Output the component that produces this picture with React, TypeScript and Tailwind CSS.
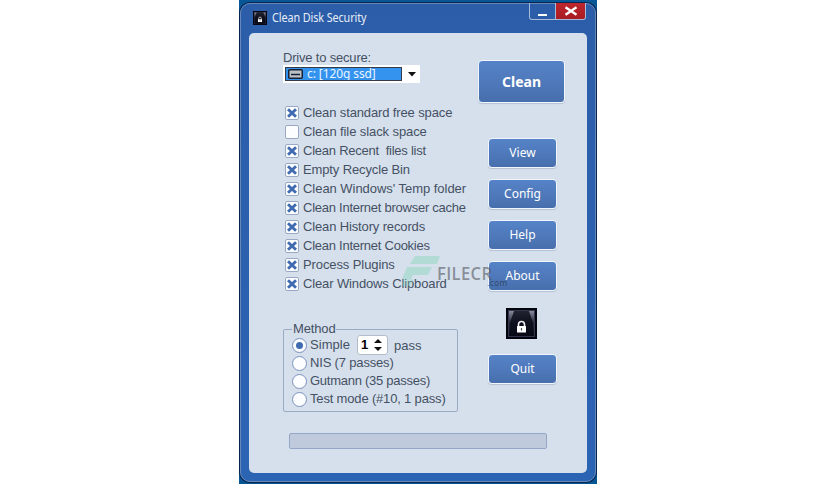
import React from "react";

const options = [
  { label: "Clean standard free space", checked: true, spacing: "tracking-[-0.13px]" },
  { label: "Clean file slack space", checked: false, spacing: "tracking-[-0.09px]" },
  { label: "Clean Recent  files list", checked: true, spacing: "tracking-[-0.24px]" },
  { label: "Empty Recycle Bin", checked: true, spacing: "tracking-[-0.13px]" },
  { label: "Clean Windows' Temp folder", checked: true, spacing: "tracking-[-0.04px]" },
  { label: "Clean Internet browser cache", checked: true, spacing: "tracking-[-0.25px]" },
  { label: "Clean History records", checked: true, spacing: "tracking-[-0.14px]" },
  { label: "Clean Internet Cookies", checked: true, spacing: "tracking-[-0.25px]" },
  { label: "Process Plugins", checked: true, spacing: "tracking-[-0.1px]" },
  { label: "Clear Windows Clipboard", checked: true, spacing: "tracking-[-0.13px]" },
];

function LockIcon({ className }: { className: string }) {
  return (
    <svg viewBox="0 0 31 31" className={className}>
      <defs>
        <linearGradient id="shine" x1="0" y1="0" x2="0" y2="1">
          <stop offset="0" stopColor="#8c8fa3" />
          <stop offset="0.45" stopColor="#292a3b" />
          <stop offset="1" stopColor="#080914" />
        </linearGradient>
      </defs>
      <rect width="31" height="31" fill="#02030c" />
      <rect x="2.5" y="2.5" width="26" height="26" fill="url(#shine)" stroke="#30364c" />
      <path d="M8 3H23L27 15V28H4V15Z" fill="#090a17" opacity="0.8" />
      <path d="M12.5 19V16.5a3 3 0 0 1 6 0V19" fill="none" stroke="#eeeef2" strokeWidth="1.6" />
      <rect x="11" y="18" width="9" height="6.5" rx="0.5" fill="#fff" />
      <path d="M15.5 20v2.5" stroke="#555" strokeWidth="1.2" />
    </svg>
  );
}

function Check({ checked }: { checked: boolean }) {
  return (
    <span className="flex size-[14px] shrink-0 items-center justify-center rounded-[2px] border border-[#9aa8c4] bg-[#fbfdff]">
      {checked && (
        <svg viewBox="0 0 10 10" className="size-[10px]">
          <path d="M1 1.2 9 8.8M9 1.2 1 8.8" stroke="#416bb0" strokeWidth="2.9" />
        </svg>
      )}
    </span>
  );
}

function Radio({ checked, label, spacing }: { checked?: boolean; label: string; spacing: string }) {
  return (
    <label className="flex h-[18px] items-center gap-[3px]">
      <span className="flex size-[15px] shrink-0 items-center justify-center rounded-full border border-[#7b91bc] bg-[#fbfdff]">
        {checked && <span className="size-[7px] rounded-full bg-[#416bb0]" />}
      </span>
      <span className={`whitespace-pre ${spacing}`}>{label}</span>
    </label>
  );
}

function ActionButton({ label, large }: { label: string; large?: boolean }) {
  return (
    <button
      className={`flex shrink-0 items-center justify-center rounded-[4px] border border-[#f0f6fc] bg-linear-to-b from-[#5683c8] to-[#476fad] text-white shadow-[0_1px_1px_#b4c1d3] ${
        large
          ? "h-[43px] w-[87px] font-['Noto_Sans',sans-serif] text-[14px] font-bold"
          : "h-[30px] w-[69px] font-['Noto_Sans',sans-serif] text-[12px]"
      }`}
    >
      {label}
    </button>
  );
}

function Watermark() {
  return (
    <div className="pointer-events-none absolute top-[256px] left-[401px] h-[36px] w-[110px]">
      <svg viewBox="0 0 110 36" className="absolute inset-0 size-full">
        <path d="M14 0H39L36 8H9Z" fill="#87d5bc" opacity="0.45" />
        <path d="M6 11H31L27 19H12L10 23H1Z" fill="#87d5bc" opacity="0.45" />
        <path d="M3 23H14L10 30H0Z" fill="#87d5bc" opacity="0.3" />
      </svg>
      <span className="absolute top-[7px] left-[36px] origin-left scale-x-[0.92] font-['Open_Sans',sans-serif] text-[18px] leading-[20px] font-semibold tracking-[0.4px] text-[#54575f]/60">
        FILECR
      </span>
      <span className="absolute top-[23px] left-[86px] font-['DejaVu_Sans',sans-serif] text-[8px] leading-[10px] tracking-[0.2px] text-[#272f41]/65">
        .com
      </span>
    </div>
  );
}

export default function App() {
  return (
    <div className="relative flex h-[484px] w-[836px] overflow-hidden bg-white pl-[239px] font-['Liberation_Sans',Arial,sans-serif] text-[13px] leading-[18px] text-[#465064]">
      <div className="flex h-[484px] w-[358px] flex-col bg-linear-to-b from-[#075797] via-[#082653] to-[#075694] px-px pt-[3px] pb-[2px]">
        <div className="flex h-[479px] w-[356px] flex-col rounded-[10px] border border-[#6888b8] bg-linear-to-b from-[#2c5da8] to-[#2c64b4] px-[8px] shadow-[0_0_0_1px_#082552]">
          <header className="flex h-[29px] shrink-0 justify-between">
            <div className="flex h-[28px] items-center gap-[5px] pl-[4px] font-['Noto_Sans',sans-serif] text-[12px] text-[#e7edf8]">
              <LockIcon className="size-[14px]" />
              <span className="origin-left scale-x-[0.9] tracking-[-0.1px] whitespace-nowrap">Clean Disk Security</span>
            </div>
            <div className="mt-[-1px] mr-px flex h-[17px] w-[57px] overflow-hidden rounded-b-[3px] border border-t-0 border-[#a7bbdb]">
              <span className="flex w-[26px] items-end justify-center border-r border-[#a7bbdb] pb-[3px]">
                <span className="h-[2px] w-[9px] bg-white" />
              </span>
              <span className="flex flex-1 items-center justify-center bg-linear-to-b from-[#bd262d] to-[#a91c23]">
                <svg viewBox="0 0 14 10" className="h-[10px] w-[14px]">
                  <path d="M1.5 1.2 12.5 8.8M12.5 1.2 1.5 8.8" stroke="white" strokeWidth="2.3" />
                </svg>
              </span>
            </div>
          </header>
          <main className="flex h-[440px] w-[338px] flex-col rounded-[5px] bg-[#d5e0ec] pl-[34px]">
            <div className="flex h-[400px] shrink-0">
              <section className="flex w-[176px] flex-col pt-[16px]">
                <span className="h-[16px] leading-[17px] tracking-[-0.19px]">Drive to secure:</span>
                <div className="flex h-[18px] w-[137px] items-center justify-between bg-white pr-[4px] pl-[2px]">
                  <div className="flex h-[14px] w-[117px] items-center overflow-hidden border border-[#343c49] bg-[#3593f0] pl-[2px] font-['Noto_Sans',sans-serif] text-[12px] tracking-[-0.1px] text-[#e8f5ff]">
                    <svg viewBox="0 0 15 10" className="mr-[4px] h-[10px] w-[15px]">
                      <rect x="0.75" y="0.75" width="13.5" height="8.5" rx="1" fill="#bbc2c7" stroke="#182033" strokeWidth="1.5" />
                      <path d="M3 5.5h9" stroke="#182033" strokeWidth="1.5" />
                    </svg>
                    <span className="leading-[12px]">c: [120g ssd]</span>
                  </div>
                  <svg viewBox="0 0 8 5" className="h-[5px] w-[8px]">
                    <path d="M0 0h8L4 4.5z" fill="#111" />
                  </svg>
                </div>
                <div className="mt-[20px] flex flex-col pl-[2px]">
                  {options.map((option) => (
                    <label key={option.label} className="flex h-[19px] items-center gap-[4px]">
                      <Check checked={option.checked} />
                      <span className={`whitespace-pre ${option.spacing}`}>{option.label}</span>
                    </label>
                  ))}
                </div>
                <fieldset className="mt-[27px] h-[92px] w-[175px] rounded-[2px] border border-[#9aabc4] pl-[8px]">
                  <legend className="h-[18px] px-[1px] tracking-[-0.15px]">Method</legend>
                  <div className="-mt-[2px] flex flex-col">
                    <div className="flex h-[18px] items-center">
                      <Radio checked label="Simple" spacing="tracking-[0.05px]" />
                      <span className="ml-[7px] flex h-[20px] w-[31px] shrink-0 items-center justify-between rounded-[3px] border border-[#b2bccb] bg-white pr-[5px] pl-[3px] font-['Liberation_Sans',Arial,sans-serif] text-[13px] font-bold text-black">
                        1
                        <svg viewBox="0 0 8 14" className="h-[14px] w-[8px]">
                          <path d="M0 5 4 1l4 4zM0 9h8l-4 4z" fill="#111" />
                        </svg>
                      </span>
                      <span className="ml-[6px] pt-[2px]">pass</span>
                    </div>
                    <Radio label="NIS (7 passes)" spacing="tracking-[-0.17px]" />
                    <Radio label="Gutmann (35 passes)" spacing="tracking-[-0.26px]" />
                    <Radio label="Test mode (#10, 1 pass)" spacing="tracking-[-0.17px]" />
                  </div>
                </fieldset>
              </section>
              <aside className="ml-[19px] flex w-[88px] flex-col items-start pt-[27px]">
                <ActionButton label="Clean" large />
                <div className="mt-[35px] ml-[10px] flex flex-col gap-[11px]">
                  <ActionButton label="View" />
                  <ActionButton label="Config" />
                  <ActionButton label="Help" />
                  <ActionButton label="About" />
                </div>
                <LockIcon className="mt-[17px] mb-[15px] ml-[28px] size-[31px] shrink-0" />
                <div className="ml-[10px]">
                  <ActionButton label="Quit" />
                </div>
              </aside>
            </div>
            <div className="ml-[6px] h-[16px] w-[258px] rounded-[2px] border border-[#94a7c7] bg-[#bfcbdc]" />
          </main>
        </div>
      </div>
      <Watermark />
    </div>
  );
}
